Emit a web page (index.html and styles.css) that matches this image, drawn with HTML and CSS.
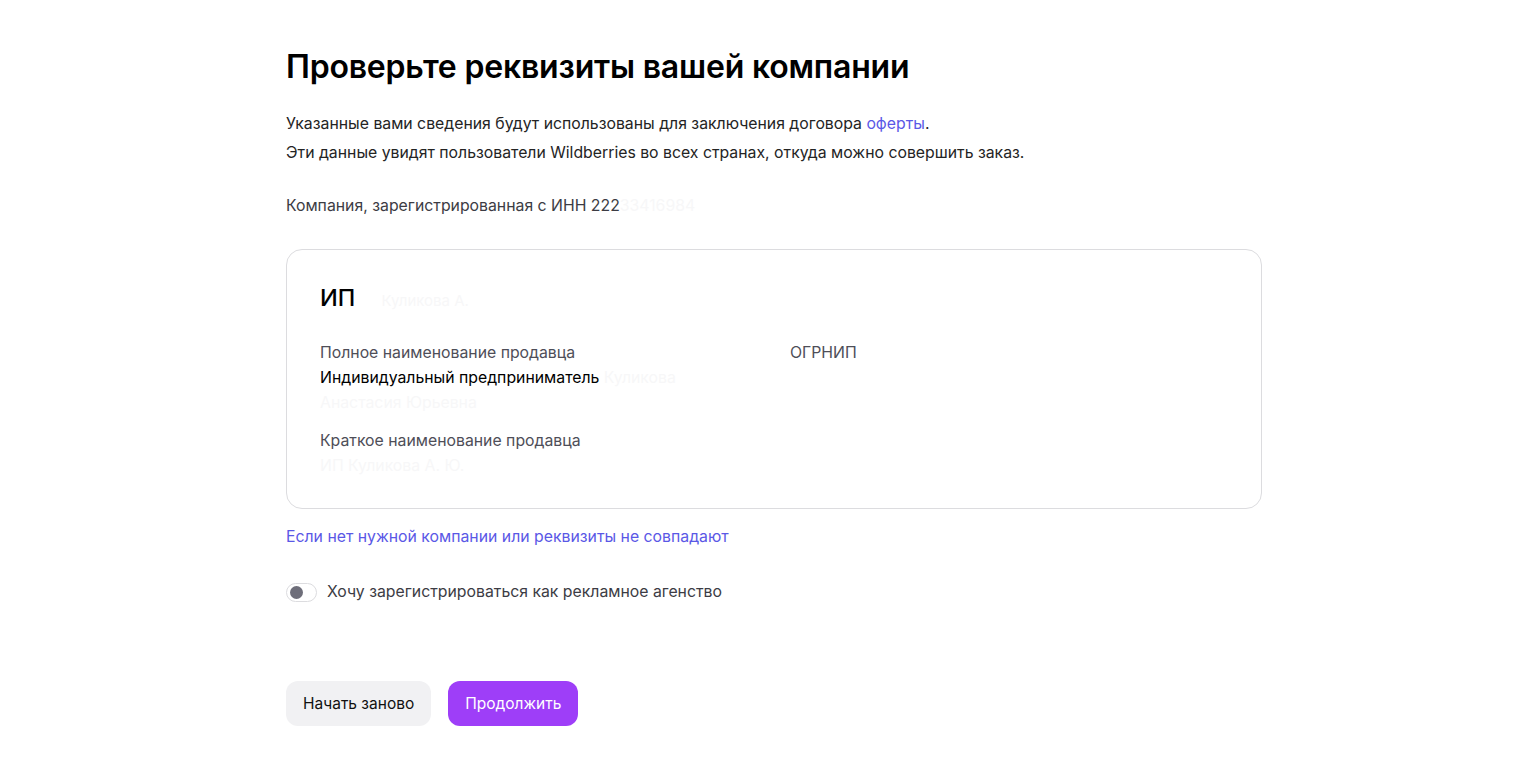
FILE: index.html
```html
<!DOCTYPE html>
<html lang="ru">
<head>
<meta charset="utf-8">
<title>Проверьте реквизиты</title>
<link rel="stylesheet" href="styles.css">
</head>
<body>
<main class="page">
  <h1 class="title">Проверьте реквизиты вашей компании</h1>
  <p class="lead">Указанные вами сведения будут использованы для заключения договора <a class="link" href="#">оферты</a>.</p>
  <p class="lead">Эти данные увидят пользователи Wildberries во всех странах, откуда можно совершить заказ.</p>
  <p class="inn">Компания, зарегистрированная с ИНН 222<span class="ghost">33416984</span></p>

  <section class="card">
    <h2 class="card-title">ИП <span class="ghost">Куликова А.</span></h2>
    <div class="grid">
      <div class="field">
        <div class="label">Полное наименование продавца</div>
        <div class="value">Индивидуальный предприниматель <span class="ghost">Куликова</span></div>
        <div class="value ghost">Анастасия Юрьевна</div>
      </div>
      <div class="field">
        <div class="label">ОГРНИП</div>
        <div class="value ghost">&nbsp;</div>
      </div>
      <div class="field">
        <div class="label">Краткое наименование продавца</div>
        <div class="value ghost">ИП Куликова А. Ю.</div>
      </div>
    </div>
  </section>

  <a class="link alt" href="#">Если нет нужной компании или реквизиты не совпадают</a>

  <label class="toggle-row">
    <span class="toggle"><span class="knob"></span></span>
    <span class="toggle-text">Хочу зарегистрироваться как рекламное агенство</span>
  </label>

  <div class="actions">
    <button class="btn secondary" type="button">Начать заново</button>
    <button class="btn primary" type="button">Продолжить</button>
  </div>
</main>
</body>
</html>
```

FILE: styles.css
```css
* { box-sizing: border-box; }
html, body { margin: 0; padding: 0; background: #fff; }
body {
  font-family: Inter, "Noto Sans", "DejaVu Sans", sans-serif;
  color: #242424;
}
.page {
  width: 976px;
  margin: 0 0 0 286px;
  padding-top: 43px;
  display: flex;
  flex-direction: column;
  align-items: flex-start;
}
.title {
  margin: 0 0 18px;
  font-size: 32px;
  font-weight: 600;
  line-height: 48px;
  letter-spacing: -0.2px;
  color: #000;
}
.lead {
  margin: 0;
  font-size: 15.8px;
  line-height: 29px;
  color: #242424;
}
.link { color: #5a58e6; text-decoration: none; }
.inn {
  margin: 24px 0 0;
  font-size: 15.8px;
  line-height: 29px;
  color: #3c3c44;
}
.ghost { color: #f7f7f8; }
.card {
  margin-top: 29px;
  width: 976px;
  height: 260px;
  border: 1px solid #dcdcdf;
  border-radius: 16px;
  padding: 32px 33px;
}
.card-title {
  margin: 0 0 23px;
  font-size: 23.5px;
  font-weight: 500;
  line-height: 32px;
  color: #000;
}
.card-title .ghost { font-size: 15px; font-weight: 400; margin-left: 20px; }
.grid {
  display: grid;
  grid-template-columns: 438px 438px;
  column-gap: 32px;
  row-gap: 13px;
}
.label {
  font-size: 15.8px;
  line-height: 25px;
  color: #4e4e58;
}
.value {
  font-size: 15.8px;
  line-height: 25px;
  color: #000;
}
.value.ghost { color: #f7f7f8; }
.alt { margin-top: 16px; font-size: 15.8px; line-height: 24px; }
.toggle-row {
  margin-top: 31px;
  display: flex;
  align-items: center;
  gap: 10px;
}
.toggle {
  width: 31px;
  height: 19px;
  border: 1.5px solid #dcdcdf;
  border-radius: 10px;
  display: flex;
  align-items: center;
  padding-left: 3px;
}
.knob {
  width: 13px;
  height: 13px;
  border-radius: 50%;
  background: #6e6e7a;
}
.toggle-text { font-size: 15.8px; line-height: 24px; color: #3c3c44; }
.actions {
  margin-top: 77px;
  display: flex;
  gap: 17px;
}
.btn {
  font-family: inherit;
  font-size: 15.5px;
  height: 45px;
  border: none;
  border-radius: 12px;
  padding: 0 17px;
  cursor: pointer;
}
.btn.secondary { background: #f1f1f3; color: #111; }
.btn.primary { background: #9e3ef8; color: #fff; }
```
